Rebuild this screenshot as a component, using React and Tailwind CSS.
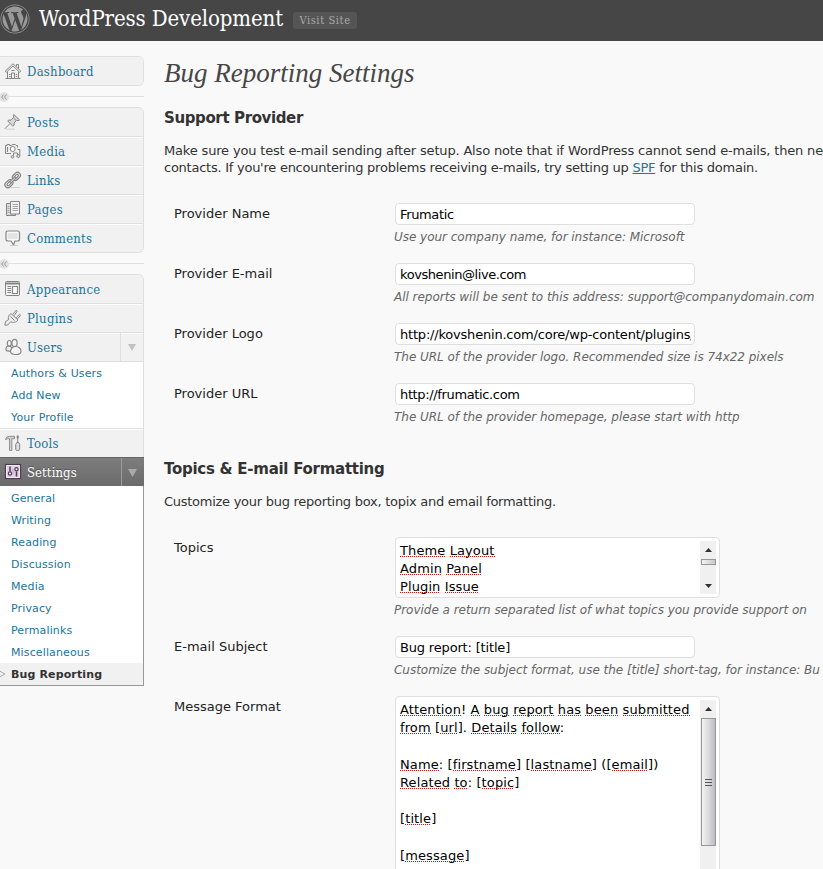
import React from "react";
import { FaWordpress } from "react-icons/fa";

const svgProps = {
  width: 18,
  height: 18,
  viewBox: "0 0 18 18",
  fill: "none",
  stroke: "#858585",
  strokeWidth: 1,
  className: "shrink-0",
};

const HomeIcon = () => (
  <svg {...svgProps}>
    <path d="M1.2 9.2 9 1.8l7.8 7.4-1.2 1L9 4l-6.6 6.2z" fill="#f6f6f6" />
    <path d="M12.500 4.500V2.500h2V6.500M3.500 9.500v6.800M14.500 9.500v6.800M1.500 16.500h15" />
    <path d="M7.500 16v-5h3v5M5 12.500h1.500M5 14.500h1.500M11.800 12.500h1.500M11.800 14.500h1.500M7.500 8.500h3" />
  </svg>
);
const PinIcon = () => (
  <svg {...svgProps}>
    <path d="M9.800 1.500 15.600 7l-1.500.700-1.500-.500-2.600 2.900.2 2-1.300 1.100L3.700 8l1.200-1 2.100.2 2.700-2.800-.4-1.600z" fill="#d9d9d9" />
    <path d="M6 10.600.8 15.800M10 5.500l2 1.900" />
    <path d="M2 16.200h9" stroke="#cfcfcf" />
  </svg>
);
const MediaIcon = () => (
  <svg {...svgProps}>
    <path d="M7 11.500H1.500v-8H3V2.500h2.500v1h2l.8-1h3l.8 1h1.400v2" fill="#eee" />
    <path d="M3.500 5v5" />
    <circle cx="8.700" cy="7" r="2.500" fill="#fff" />
    <path d="M9.500 14.500v-3.500h4v3.500M13.500 7.500h2.300v6" />
    <circle cx="8.500" cy="14.800" r="1.300" fill="#ddd" />
    <circle cx="14.300" cy="14" r="1.500" fill="#ddd" />
  </svg>
);
const LinkIcon = () => (
  <svg {...svgProps} strokeWidth="1.100">
    <g transform="rotate(-45 9 9)">
      <rect x="-1" y="5.800" width="9" height="6" rx="3" fill="#ddd" />
      <rect x="1.200" y="7.700" width="4.800" height="2.200" rx="1.100" fill="#fff" />
      <rect x="9.500" y="5.800" width="9" height="6" rx="3" fill="#ddd" />
      <rect x="11.500" y="7.700" width="4.800" height="2.200" rx="1.100" fill="#fff" />
      <path d="M5 8h7.500v1.700H5z" fill="#eee" />
    </g>
    <path d="M6 16.500h10" stroke="#d2d2d2" />
  </svg>
);
const PagesIcon = () => (
  <svg {...svgProps}>
    <path d="M6.500 3.500h-4v12h9v-1.500" fill="#ddd" />
    <path d="M6.500 1.500h9v12.500h-9z" fill="#f4f4f4" />
    <path d="M8.500 4.500H14M8.500 6.500H14M8.500 8.500H14M8.500 10.500H14M3.500 6.500h2M3.500 8.500h2M3.500 10.500h2M3.500 12.500h2" stroke="#a3a3a3" />
  </svg>
);
const CommentIcon = () => (
  <svg {...svgProps} strokeWidth="1.200">
    <path d="M4 2h9.500Q15.500 2 15.500 4v6q0 2-2 2H11l-1.500 4L7 12H4Q2 12 2 10V4q0-2 2-2z" fill="#fafafa" />
    <path d="M3.700 5h10M3.700 7h10M3.700 9h10" stroke="#dcdcdc" strokeWidth="1.500" />
    <path d="M6 16.500h8" stroke="#ccc" />
  </svg>
);
const AppearanceIcon = () => (
  <svg {...svgProps}>
    <rect x="1.500" y="1.500" width="14" height="14" rx="1" fill="#f4f4f4" />
    <path d="M2 3.500h13" strokeWidth="2" />
    <path d="M8.500 6.500h5v7h-5z" fill="#fff" strokeWidth="1.200" />
    <path d="M3.500 6.500h3.500M3.500 8.500h3.500M3.500 10.500h3.500M3.500 12.500h3.500" />
  </svg>
);
const PluginIcon = () => (
  <svg {...svgProps}>
    <path d="m7 4.500 7 6.500c-2 2.600-5 3-7.200 1.700L3.700 16 .8 16.200l.7-3.500L4.600 10.500C3.700 8.500 4.800 5.800 7 4.500z" fill="#ececec" />
    <path d="M8.800 5.500 12 1.300l1.200 1L10 6.700M12.200 8.800l3.300-3.600 1.100 1-3.200 3.900M6.500 7.500l4 4" />
  </svg>
);
const UsersIcon = () => (
  <svg {...svgProps} strokeWidth="1.200">
    <path d="M2 11.500c0-2 1-3.500 2.500-3.500S8 9 8 11.500s-6 2-6 0z" fill="#eee" />
    <ellipse cx="5.300" cy="5.300" rx="2" ry="2.800" fill="#f5f5f5" />
    <ellipse cx="10.500" cy="5" rx="2.600" ry="3.600" fill="#f5f5f5" />
    <path d="M6.500 13.500c0-2.500 2-5 5.200-5s5.300 2.300 5.300 4.700-2.200 3.300-5.300 3.300-5.200-.5-5.200-3z" fill="#f5f5f5" />
  </svg>
);
const ToolsIcon = () => (
  <svg {...svgProps}>
    <path d="M1.500 5.500Q2 2.300 5 2.300h5.500v2.400H7.800v11.800H5.500V4.700Q3 4.500 1.500 5.500z" fill="#d5d5d5" strokeWidth=".9" />
    <path d="M13.700 4v4.500M12.800 8.500h2l.9 2v5q0 1-2 1t-2-1v-5z" fill="#ddd" />
    <path d="M13.700 1.500v3" strokeWidth="2" />
  </svg>
);
const SettingsIcon = () => (
  <svg {...svgProps} stroke="#4f3a56">
    <rect x="1.500" y="1.500" width="15" height="14" fill="#fff" strokeWidth="1.200" />
    <rect x="3" y="3" width="12" height="11" fill="#dfcfe2" stroke="none" />
    <path d="M6 3.500v5M12.500 8.500v5" strokeWidth="1.500" />
    <path d="M9 6v5" stroke="#bba5c0" />
    <circle cx="6" cy="10.500" r="1.600" fill="#fff" strokeWidth="1.200" />
    <circle cx="12.500" cy="6.200" r="1.600" fill="#fff" strokeWidth="1.200" />
  </svg>
);

const serif = "font-['DejaVu_Serif_Condensed','DejaVu_Serif',Georgia,serif] [font-stretch:condensed]";

function Row({ icon: Icon, label, first, arrow }) {
  return (
    <div className={`flex items-center bg-[#f1f1f1] pl-1 ${first ? "h-7" : "h-[29px] border-t border-[#dfdfdf] shadow-[inset_0_1px_0_#fff]"}`}>
      <Icon />
      <span className={`ml-[5px] flex-1 pt-px text-[13px] leading-[18px] tracking-[.25px] text-[#21759b] ${serif}`}>{label}</span>
      {arrow && (
        <span className="flex h-full w-[23px] items-center justify-center border-l border-[#dfdfdf]">
          <svg width="8" height="7" className="mt-px"><path d="M0 0h8L4 7z" fill="#c2c2c2" /></svg>
        </span>
      )}
    </div>
  );
}

function Collapse() {
  return (
    <div className="flex h-[21px] items-center">
      <span className="-ml-px flex size-[10px] items-center justify-center rounded-full bg-[#e3e3e3]">
        <svg width="6" height="6" fill="none" stroke="#9a9a9a"><path d="M2.700.5.700 3l2 2.500M5.500.5l-2 2.500 2 2.500" /></svg>
      </span>
      <span className="h-px flex-1 bg-[#dfdfdf]" />
    </div>
  );
}

function SubLink({ children }) {
  return <div className="h-[22px] pl-[11px] text-[11px] leading-6 tracking-[.13px] text-[#21759b]">{children}</div>;
}

function Sidebar() {
  return (
    <nav className="w-36 shrink-0 pt-[15px]">
      <div className="h-[30px] overflow-hidden rounded-r-md border border-l-0 border-[#dfdfdf]">
        <Row icon={HomeIcon} label="Dashboard" first />
      </div>
      <Collapse />
      <div className="h-[146px] overflow-hidden rounded-r-md border border-l-0 border-[#dfdfdf]">
        <Row icon={PinIcon} label="Posts" first />
        <Row icon={MediaIcon} label="Media" />
        <Row icon={LinkIcon} label="Links" />
        <Row icon={PagesIcon} label="Pages" />
        <Row icon={CommentIcon} label="Comments" />
      </div>
      <Collapse />
      <div className="overflow-hidden rounded-tr-md border border-b-0 border-l-0 border-[#dfdfdf]">
        <Row icon={AppearanceIcon} label="Appearance" first />
        <Row icon={PluginIcon} label="Plugins" />
        <Row icon={UsersIcon} label="Users" arrow />
        <div className="border-t border-[#dfdfdf] bg-white">
          {["Authors & Users", "Add New", "Your Profile"].map((t) => <SubLink key={t}>{t}</SubLink>)}
        </div>
        <Row icon={ToolsIcon} label="Tools" />
      </div>
      <div className="flex h-[29px] items-center border-t border-[#666] bg-linear-to-b from-[#7d7d7d] to-[#6a6a6a] pl-1">
        <SettingsIcon />
        <span className={`ml-[5px] flex-1 pt-px text-[13px] leading-[18px] tracking-[.08px] text-white [text-shadow:0_-1px_0_#555] ${serif}`}>Settings</span>
        <span className="flex h-full w-[23px] items-center justify-center border-l border-[#999]">
          <svg width="9" height="8" className="mt-px mr-px"><path d="M0 0h9L4.500 8z" fill="#aaa" /></svg>
        </span>
      </div>
      <div className="border-r border-b border-[#999] bg-white pt-px">
        {["General", "Writing", "Reading", "Discussion", "Media", "Privacy", "Permalinks", "Miscellaneous"].map((t) => <SubLink key={t}>{t}</SubLink>)}
        <div className="flex h-[22px] items-center bg-[#f1f1f1]">
          <svg width="11" height="8" fill="none" stroke="#aaa"><path d="M-1 .7 5 4-1 7.300" /></svg>
          <span className="pt-[2px] text-[11px] font-bold tracking-[.13px] text-[#333]">Bug Reporting</span>
        </div>
      </div>
    </nav>
  );
}

function Field({ label, height, help, children }) {
  return (
    <div className={`flex ${height}`}>
      <label className="w-[231px] shrink-0 pt-[3px] pl-[10px] text-[13px] leading-4 text-[#222]">{label}</label>
      <div className="min-w-0 flex-1">
        {children}
        {help && <p className="mt-1 -ml-px text-[12px] leading-4 tracking-[-.03px] whitespace-nowrap text-[#666] italic">{help}</p>}
      </div>
    </div>
  );
}

function TextInput({ value, spacing = "tracking-[-.36px]" }) {
  return (
    <input
      type="text"
      defaultValue={value}
      className={`block h-[22px] w-[300px] rounded-sm border border-[#dfdfdf] bg-white pr-[3px] pl-1 text-[13px] text-black outline-none ${spacing}`}
    />
  );
}

const Typo = ({ children }) => (
  <span className="bg-[image:repeating-linear-gradient(90deg,#f00_0_1px,transparent_1px_2px)] bg-[length:100%_1px] bg-[position:0_calc(100%_-_1px)] bg-no-repeat">{children}</span>
);

// Words are flagged by the spell checker, punctuation is not.
function Checked({ text }) {
  return text.split(/([A-Za-z]+)/).map((part, i) => (i % 2 ? <Typo key={i}>{part}</Typo> : part));
}

const UpArrow = () => <svg width="7" height="4"><path d="M0 4 3.500 0 7 4z" fill="#333" /></svg>;
const DownArrow = () => <svg width="7" height="4"><path d="M0 0h7L3.500 4z" fill="#333" /></svg>;

function TextArea({ lines, className, children }) {
  return (
    <div className={`flex w-[325px] overflow-hidden rounded-sm border border-[#dfdfdf] bg-white py-[3px] pr-[3px] pl-1 ${className}`}>
      <div className="min-w-0 flex-1 pt-px text-[13px] leading-[18.2px] tracking-[.11px] whitespace-nowrap text-black">
        {lines.map((l, i) => (
          <div key={i} className="h-[18.2px]"><Checked text={l} /></div>
        ))}
      </div>
      {children}
    </div>
  );
}

export default function App() {
  return (
    <div className="h-[869px] w-[823px] overflow-hidden bg-[#f9f9f9] font-['DejaVu_Sans',Verdana,sans-serif]">
      <header className="flex h-[41px] bg-[#464646]">
        <FaWordpress className="mt-1 size-[30px] shrink-0 text-[#999]" />
        <h1 className={`mt-1 ml-[9px] w-[245px] text-[22px] leading-[30px] tracking-[-.12px] whitespace-nowrap text-white ${serif}`}>WordPress Development</h1>
        <span className={`mt-3 ml-[9px] flex h-[17px] w-16 items-center justify-center rounded-[3px] bg-[#555] pt-px text-[11px] tracking-[.6px] text-[#aaa] ${serif}`}>Visit Site</span>
      </header>
      <div className="flex">
        <Sidebar />
        <main className="ml-5 min-w-0 flex-1">
          <h2 className="mt-[15px] h-[34px] font-['Liberation_Serif',Georgia,serif] text-[27px] leading-[34px] whitespace-nowrap text-[#464646] italic">Bug Reporting Settings</h2>
          <h3 className="mt-[18px] text-[15px] leading-5 font-bold tracking-[-.38px] whitespace-nowrap text-[#333]">Support Provider</h3>
          <p className="mt-[14px] text-[13px] leading-[17px] tracking-[-.25px] whitespace-nowrap text-[#333]">
            <span className="tracking-[-.17px]">Make sure you test e-mail sending after setup. Also note that if WordPress cannot send e-mails, then ne</span><br />
            contacts. If you're encountering problems receiving e-mails, try setting up <a className="text-[#21759b] underline">SPF</a> for this domain.
          </p>
          <div className="mt-[27px]">
            <Field label="Provider Name" height="h-[60px]" help="Use your company name, for instance: Microsoft"><TextInput value="Frumatic" /></Field>
            <Field label="Provider E-mail" height="h-[60px]" help="All reports will be sent to this address: support@companydomain.com"><TextInput value="kovshenin@live.com" spacing="tracking-[-.42px]" /></Field>
            <Field label="Provider Logo" height="h-[60px]" help="The URL of the provider logo. Recommended size is 74x22 pixels"><TextInput value="http://kovshenin.com/core/wp-content/plugins/" spacing="tracking-[-.2px]" /></Field>
            <Field label="Provider URL" height="h-[60px]" help="The URL of the provider homepage, please start with http"><TextInput value="http://frumatic.com" /></Field>
          </div>
          <h3 className="mt-4 text-[15px] leading-5 font-bold tracking-[-.27px] whitespace-nowrap text-[#333]">Topics &amp; E-mail Formatting</h3>
          <p className="mt-[14px] text-[13px] leading-[17px] tracking-[-.27px] whitespace-nowrap text-[#333]">Customize your bug reporting box, topix and email formatting.</p>
          <div className="mt-[27px]">
            <Field label="Topics" height="h-[99px]" help="Provide a return separated list of what topics you provide support on">
              <TextArea className="h-[61px]" lines={["Theme Layout", "Admin Panel", "Plugin Issue"]}>
                <div className="flex h-[53px] w-4 flex-col items-center justify-between bg-[#f0f0f0] pt-[7px] pb-[6px]">
                  <UpArrow />
                  <span className="-mt-[13px] h-[6px] w-[15px] border border-[#979797] bg-linear-to-r from-[#f3f3f3] to-[#c8c8c8]" />
                  <DownArrow />
                </div>
              </TextArea>
            </Field>
            <Field label="E-mail Subject" height="h-[60px]" help="Customize the subject format, use the [title] short-tag, for instance: Bu"><TextInput value="Bug report: [title]" spacing="tracking-[-.17px]" /></Field>
            <Field label="Message Format" height="h-[200px]">
              <TextArea
                className="h-[200px]"
                lines={["Attention! A bug report has been submitted", "from [url]. Details follow:", "", "Name: [firstname] [lastname] ([email])", "Related to: [topic]", "", "[title]", "", "[message]"]}
              >
                <div className="flex w-4 flex-col items-center bg-[#f0f0f0] pt-[7px]">
                  <UpArrow />
                  <span className="mt-[7px] flex h-[128px] w-[15px] flex-col items-center justify-center gap-px border border-[#979797] bg-linear-to-r from-[#f3f3f3] via-[#dcdcde] to-[#bcbcc0]">
                    <i className="h-px w-[7px] bg-[#555]" />
                    <i className="mt-px h-px w-[7px] bg-[#555]" />
                    <i className="mt-px h-px w-[7px] bg-[#555]" />
                  </span>
                </div>
              </TextArea>
            </Field>
          </div>
        </main>
      </div>
    </div>
  );
}
